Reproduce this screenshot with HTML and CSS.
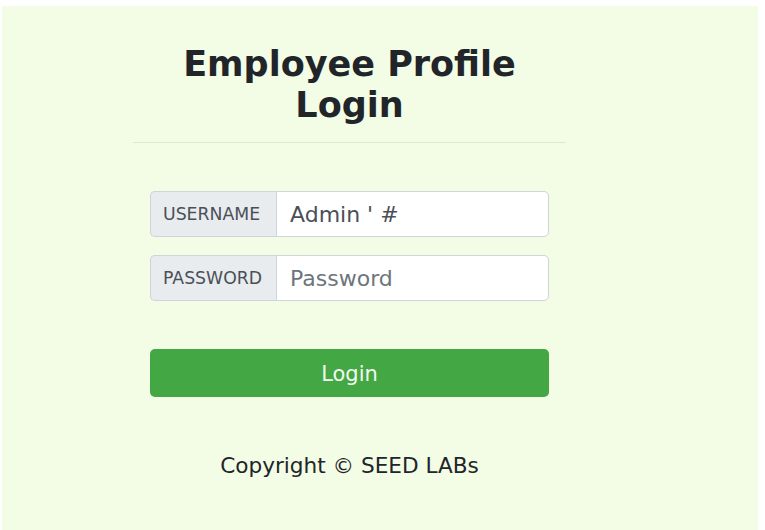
FILE: index.html
```html
<!DOCTYPE html>
<html lang="en">
<head>
<meta charset="utf-8">
<title>Employee Profile Login</title>
<link rel="stylesheet" href="styles.css">
</head>
<body>
<div class="panel">
  <div class="column">
    <h2 class="title">Employee Profile<br>Login</h2>
    <hr class="divider">
    <form class="form">
      <div class="group">
        <span class="addon">USERNAME</span>
        <input class="field" type="text" value="Admin ' #">
      </div>
      <div class="group">
        <span class="addon">PASSWORD</span>
        <input class="field" type="password" placeholder="Password">
      </div>
      <button class="btn" type="button">Login</button>
    </form>
    <p class="copy">Copyright © SEED LABs</p>
  </div>
</div>
</body>
</html>
```
FILE: styles.css
```css
html, body {
  margin: 0;
  padding: 0;
  background: #ffffff;
  overflow: hidden;
}
body {
  font-family: "DejaVu Sans", sans-serif;
  color: #212529;
}
.panel {
  margin: 6px 7px 0 2px;
  height: 524px;
  background: #f3fce4;
  display: flex;
}
.column {
  width: 433px;
  margin-left: 131px;
  display: flex;
  flex-direction: column;
}
.title {
  margin: 38px 0 0;
  font-size: 35px;
  line-height: 41px;
  font-weight: bold;
  text-align: center;
  color: #212529;
}
.divider {
  margin: 16px 0 0;
  border: 0;
  border-top: 1px solid #e0e6d6;
  height: 0;
}
.form {
  margin: 48px 17px 0;
  display: flex;
  flex-direction: column;
}
.group {
  display: flex;
  height: 46px;
  margin-bottom: 18px;
}
.addon {
  box-sizing: border-box;
  width: 126px;
  flex: none;
  display: flex;
  align-items: center;
  padding: 0 12px;
  background: #e9ecef;
  border: 1px solid #ced4da;
  border-right: 0;
  border-radius: 5px 0 0 5px;
  font-size: 17.3px;
  color: #495057;
}
.field {
  box-sizing: border-box;
  flex: 1;
  min-width: 0;
  height: 46px;
  padding: 0 13px;
  border: 1px solid #ced4da;
  border-radius: 0 5px 5px 0;
  background: #ffffff;
  font-family: "DejaVu Sans", sans-serif;
  font-size: 22px;
  color: #495057;
  outline: none;
}
.field::placeholder {
  color: #6c757d;
}
.btn {
  margin-top: 30px;
  height: 48px;
  padding-top: 2px;
  border: 0;
  border-radius: 5px;
  background: #43a743;
  color: #f2faf2;
  font-family: "DejaVu Sans", sans-serif;
  font-size: 21px;
}
.copy {
  margin: 53px 0 0;
  text-align: center;
  font-size: 21.6px;
  line-height: 32px;
  color: #212529;
}
```
